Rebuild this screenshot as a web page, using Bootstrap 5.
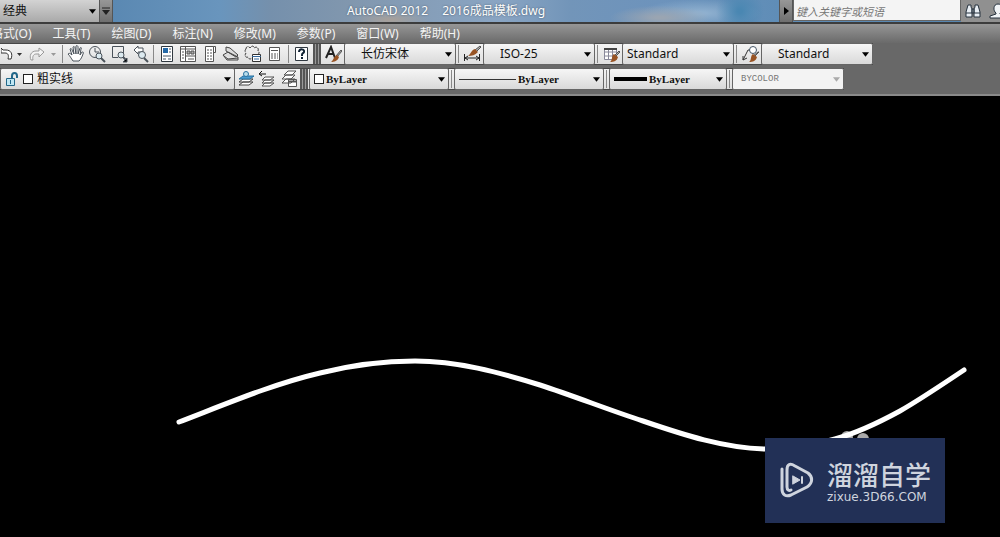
<!DOCTYPE html>
<html lang="zh-CN">
<head>
<meta charset="utf-8">
<meta name="viewport" content="width=device-width, initial-scale=1">
<title>AutoCAD 2012 - 2016成品模板.dwg</title>
<link href="https://cdn.jsdelivr.net/npm/bootstrap@5.3.0/dist/css/bootstrap.min.css" rel="stylesheet">
<style>
  body { font-family: "Noto Sans", "Noto Sans CJK SC", sans-serif; font-size: 12px; line-height: 16px; background: #000; color: #111; }
  .title-bar { height: 24px; border-bottom: 2px solid #3c3c3c;
    background:
      radial-gradient(ellipse 50px 12px at 66% 80%, #9aa5b2 10%, transparent),
      radial-gradient(ellipse 40px 10px at 39% 90%, #a5a09c 10%, transparent),
      radial-gradient(ellipse 24px 24px at 74% 50%, #4a87b2 10%, transparent),
      radial-gradient(ellipse 60px 14px at 70% 60%, #8fb0cf 10%, transparent),
      linear-gradient(90deg, #5a88b2 11%, #6995bd 22%, #7590ac 27%, #8197ae 35%, #8aa5c3 50%, #7295b9 57%, #6d93bc 66%, #5f8db7 78%, #5584ae); }
  .tool-button { height: 20px; width: 21px; border: 0; padding: 0; background: transparent; display: flex; align-items: center; justify-content: center; }
  .title-bar .edge-button { width: 14px; height: 22px; background: linear-gradient(#979797, #6f6f6f); border: 1px solid #555; border-width: 0 1px; }
  .bar-select, .bar-search { background-color: transparent; border: 0; border-radius: 0; font-size: 12px; line-height: 16px; }
  .workspace-box { width: 99px; background: linear-gradient(#d3d3d3, #a9a9a9); }
  .bar-search { width: 168px; height: 21px; background: #f4f4f4; border: 1px solid #666; font-size: 11px; padding: 4px 2px 2px; border-top: 0; }
  .bar-search::placeholder { color: #777; font-style: italic; }
  .tail-icons { width: 39px; background: #909090; }
  .doc-title { color: #fff; text-shadow: 0 0 2px #456; gap: 14px; }
  .menu-strip { height: 19px; margin-left: -9px; gap: 21px; }
  .menu-back { background: linear-gradient(#969696, #6a6a6a); }
  .menu-strip a { color: #f4f4f4; }
  .tool-area { background: #686868; border-bottom: 2px solid #8a8a8a; padding-bottom: 4px; }
  .tool-row { height: 22px; margin-bottom: 3px; border: 1px solid #484848; border-width: 1px 0; background: linear-gradient(#f3f3f3, #dfdfdf); width: max-content; }
  .tool-row svg, .tail-icons svg, .title-bar svg { display: block; flex: none; }
  .tool-button.undo, .tool-button.drop { width: 13px; }
  .tool-button.wide { width: 22px; }
  .divider { width: 1px; height: 18px; margin: 0 2px; background: #888; }
  .handle { width: 8px; height: 20px; margin: 0 1px; background: repeating-linear-gradient(90deg, #555 0 2px, #999 2px 3px); }
  .combo { height: 22px; display: flex; align-items: center; border: 1px solid #666; border-radius: 2px; background: linear-gradient(#f6f6f6, #d9d9d9); }
  .bar-select { --bs-form-select-bg-img: url("data:image/svg+xml,%3Csvg xmlns='http://www.w3.org/2000/svg' viewBox='0 0 8 5'%3E%3Cpath d='M0 0h8L4 5z'/%3E%3C/svg%3E");
    background-image: var(--bs-form-select-bg-img); background-size: 7px 5px; background-position: right 3px center; color: #111; padding: 0 14px 0 4px; height: 20px; }
  .workspace-box .bar-select { padding-left: 3px; height: 22px; }
  .inset { padding-left: 16px; }
  .by-layer { font: bold 11px/16px "Liberation Serif", serif; padding-left: 2px; }
  .by-color { font: 9px/16px "Liberation Mono", monospace; opacity: 1; }
  .combo.dimmed { background: #f3f3f3; }
  .combo.dimmed .bar-select { background-color: transparent; color: #777; --bs-form-select-bg-img: url("data:image/svg+xml,%3Csvg xmlns='http://www.w3.org/2000/svg' viewBox='0 0 8 5'%3E%3Cpath fill='%23aaa' d='M0 0h8L4 5z'/%3E%3C/svg%3E"); }
  .swatch { width: 10px; height: 10px; border: 1px solid #222; background: #fff; flex: none; }
  .thin-line { width: 57px; height: 1px; background: #333; flex: none; }
  .thick-line { width: 33px; height: 4px; background: #000; flex: none; }
  .w-style { width: 112px; }
  .w-layers { width: 235px; }
  .w-color { width: 140px; }
  .w-line { width: 150px; }
  .w-weight { width: 118px; }
  .watermark { right: 55px; bottom: 14px; width: 180px; height: 85px; background: #223056; color: #cfd4de; gap: 13px; padding-left: 14px; }
  .mark-name { font: 500 26px/32px "Noto Sans CJK SC", sans-serif; }
  .mark-site { font: 12px/14px "DejaVu Sans", sans-serif; }
</style>
</head>
<body class="d-flex flex-column min-vh-100 overflow-hidden">
<header>
  <div class="title-bar d-flex">
    <div class="workspace-box"><select class="form-select bar-select" aria-label="工作空间"><option>经典</option></select></div>
    <button class="edge-button tool-button" aria-label="更多"><svg width="8" height="8"><path d="M0 1h8" stroke="#222"/><path d="M0 3h8L4 8z" fill="#222"/></svg></button>
    <div class="doc-title flex-grow-1 d-flex justify-content-center align-items-center"><span>AutoCAD 2012</span><span>2016成品模板.dwg</span></div>
    <button class="edge-button tool-button" aria-label="展开"><svg width="5" height="8"><path d="M0 0l5 4-5 4z"/></svg></button>
    <input class="bar-search" type="search" placeholder="键入关键字或短语" aria-label="搜索">
    <div class="tail-icons d-flex align-items-center gap-2 overflow-hidden ps-1">
      <svg width="16" height="17" viewBox="0 0 16 17" fill="#e8eef4" stroke="#26323e"><path d="M3 2h3v2l1 2v8H1V9zM10 2h3l2 7v5H9V6l1-2zM7 6h2v4H7zM1 10h6M9 10h6"/></svg>
      <svg width="18" height="17" viewBox="0 0 18 17" fill="#f1f4f7" stroke="#26323e"><path d="M9 1c5 0 5 7 2 9v1l6 2v2H1v-2l6-2v-1C4 8 4 1 9 1z"/></svg>
    </div>
  </div>
  <div class="menu-back overflow-hidden">
    <nav class="menu-strip d-flex align-items-center text-nowrap">
      <a class="text-decoration-none" href="#">格式(O)</a>
      <a class="text-decoration-none" href="#">工具(T)</a>
      <a class="text-decoration-none" href="#">绘图(D)</a>
      <a class="text-decoration-none" href="#">标注(N)</a>
      <a class="text-decoration-none" href="#">修改(M)</a>
      <a class="text-decoration-none" href="#">参数(P)</a>
      <a class="text-decoration-none" href="#">窗口(W)</a>
      <a class="text-decoration-none" href="#">帮助(H)</a>
    </nav>
  </div>
  <div class="tool-area overflow-hidden">
    <div class="tool-row d-flex align-items-center">
      <button class="tool-button undo" aria-label="放弃"><svg width="12" height="16" viewBox="0 0 12 16" fill="#fff" stroke="#333"><path d="M0 2v5h4c3 0 4 2 3 6h3c2-5 0-9-5-9H2L0 2"/></svg></button>
      <button class="tool-button drop" aria-label="放弃列表"><svg width="5" height="3"><path d="M0 0h5L2.500 3z" fill="#333"/></svg></button>
      <button class="tool-button" aria-label="重做"><svg width="16" height="16" viewBox="0 0 16 16" fill="#f4f4f4" stroke="#999"><path d="M15 6l-5-4v3H7c-5 0-7 5-5 9h2c-1-4 1-6 3-6h3v3z"/></svg></button>
      <button class="tool-button drop" aria-label="重做列表"><svg width="5" height="3"><path d="M0 0h5L2.500 3z" fill="#999"/></svg></button>
      <span class="divider"></span>
      <button class="tool-button" aria-label="平移"><svg width="18" height="18" viewBox="0 0 18 18" fill="#fff" stroke="#4a525a" stroke-linejoin="round"><path d="M6 16C4 13 3 11 1 9c1-1 2-1 4 1L3 4c1-1 2 0 2 1l2 4-1-7c1-1 2 0 2 1l1 6V1c1-1 2 0 2 1v7l2-6c1-1 2 0 1 1l-1 6 2-3c1 0 2 0 1 2-1 3-2 5-4 7z"/></svg></button>
      <button class="tool-button wide" aria-label="实时缩放"><svg width="18" height="18" viewBox="0 0 18 18" fill="none" stroke="#4a525a"><circle cx="7" cy="7" r="5.500"/><path d="M7 3v4h4"/><circle cx="11" cy="11" r="3" fill="#dceaf0"/><path d="M13 13l4 4" stroke-width="2"/></svg></button>
      <button class="tool-button wide" aria-label="窗口缩放"><svg width="18" height="18" viewBox="0 0 18 18" fill="none" stroke="#4a525a"><path d="M8 12.500H2.500v-11h11V8"/><circle cx="11" cy="10" r="3" fill="#dceaf0"/><path d="M13 12l3 3" stroke-width="2"/><path d="M17 13v4h-4z" fill="#000"/></svg></button>
      <button class="tool-button" aria-label="缩放上一个"><svg width="18" height="18" viewBox="0 0 18 18" fill="#fff" stroke="#4a525a"><path d="M2 5l4-4v2h5v4H6v2z"/><circle cx="10" cy="10" r="3.500" fill="#dceaf0"/><path d="M12 13l4 4" stroke-width="2"/></svg></button>
      <span class="divider"></span>
      <button class="tool-button" aria-label="特性"><svg width="16" height="18" viewBox="0 0 16 18" fill="#fff" stroke="#303840"><path d="M2.500 1.500h11v15h-11z"/><path d="M4 3h5v5H4z" fill="#2469a8" stroke="none"/><path d="M10 4h2M10 7h2M4 11h8M4 14h3M9 14h3" stroke="#456"/></svg></button>
      <button class="tool-button wide" aria-label="设计中心"><svg width="18" height="18" viewBox="0 0 18 18" fill="#fff" stroke="#555"><path d="M1.500 1.500h15v15h-15zM6.500 2v14M1 4h16M3 7h2M3 10h2M3 13h2M6 11h11"/><path d="M8 6h3v3H8zM12 6h3v3h-3z" fill="#aaa"/><path d="M9 14h6"/></svg></button>
      <button class="tool-button" aria-label="工具选项板"><svg width="16" height="18" viewBox="0 0 16 18" fill="#fff" stroke="#555"><path d="M3.500 1.500h8v15h-8zM11.500 1.500h2v6h-2"/><path d="M5 5h5M5 8h5M5 11h5M5 14h5" stroke-dasharray="2 1"/></svg></button>
      <button class="tool-button wide" aria-label="图纸集"><svg width="18" height="18" viewBox="0 0 18 18" fill="#ddd" stroke="#444" stroke-linejoin="round"><path d="M4 2l4 1 8 7-2 2L4 6zM1 10l5-3 10 5v3H5zM2 11l4 3 10-1"/></svg></button>
      <button class="tool-button" aria-label="标记集"><svg width="18" height="18" viewBox="0 0 18 18" fill="none" stroke="#333"><path d="M2 4c0-3 3-3 4-1 2-3 4-2 4 0 3-2 5 0 4 3 2 2 1 3 0 3M2 4c-2 2 0 4 0 4-2 3 0 5 2 4 1 3 3 2 4 1" stroke-dasharray="3 1"/><path d="M8.500 9.500h8v7h-8z" fill="#fff"/><path d="M8 11.500h9M10 14h5" stroke="#369"/></svg></button>
      <button class="tool-button" aria-label="快速计算器"><svg width="16" height="18" viewBox="0 0 16 18" fill="#fff" stroke="#555"><path d="M3.500 2.500h10v13h-10zM5 5.500h7"/><path d="M5 9h7M5 11h7M5 13h7" stroke-dasharray="2 1"/></svg></button>
      <span class="divider ms-1"></span>
      <button class="tool-button" aria-label="帮助"><svg width="16" height="18" viewBox="0 0 16 18"><path d="M1.500 2.500h12v13h-12z" fill="#fff" stroke="#303840"/><path d="M5 7c0-4 6-3 5 0 0 1-2 1-2 3v1M8 12v2" fill="none" stroke="#123" stroke-width="2"/></svg></button>
      <span class="handle"></span>
      <button class="tool-button wide" aria-label="文字样式"><svg width="18" height="18" viewBox="0 0 18 18"><path d="M2 13L7 2l4 11M4 9h6" fill="none" stroke="#222" stroke-width="2"/><path d="M17 5l-5 6 1 1 5-6z" fill="#aaa" stroke="#555"/><path d="M13 10l2 2c-1 4-5 5-8 5 3-2 2-5 6-7z" fill="#985323"/></svg></button>
      <div class="combo w-style"><select class="form-select bar-select inset" aria-label="文字样式列表"><option>长仿宋体</option></select></div>
      <span class="divider"></span>
      <button class="tool-button wide" aria-label="标注样式"><svg width="18" height="18" viewBox="0 0 18 18"><path d="M1.500 9v7M16.500 9v7M2 13h14M5 11l-3 2 3 2M13 11l3 2-3 2" fill="none" stroke="#222"/><path d="M17 1l-5 4 1 2 5-5z" fill="#aaa" stroke="#555"/><path d="M12 4l3 3c-3 3-6 4-10 4 3-2 3-6 7-7z" fill="#985323"/></svg></button>
      <div class="combo w-style"><select class="form-select bar-select inset" aria-label="标注样式列表"><option>ISO-25</option></select></div>
      <span class="divider"></span>
      <button class="tool-button wide" aria-label="表格样式"><svg width="18" height="18" viewBox="0 0 18 18"><path d="M2.500 3.500h12v11h-12zM2 7h12M2 11h12M6.500 4v10M10.500 4v10" fill="#fff" stroke="#889"/><path d="M2 3h13v2H2z" fill="#444"/><path d="M17 6l-5 5 1 1 5-5z" fill="#aaa" stroke="#555"/><path d="M12 9l4 3c-1 4-4 5-8 5 3-2 1-6 4-8z" fill="#985323"/></svg></button>
      <div class="combo w-style"><select class="form-select bar-select" aria-label="表格样式列表"><option>Standard</option></select></div>
      <span class="divider"></span>
      <button class="tool-button wide" aria-label="多重引线样式"><svg width="18" height="18" viewBox="0 0 18 18"><path d="M2 15L7 5h3M2 15v-4M2 15l4-2" fill="none" stroke="#333"/><circle cx="12" cy="5" r="3.500" fill="#fff" stroke="#456"/><path d="M17 7l-5 4 1 1 5-5z" fill="#aaa" stroke="#555"/><path d="M12 9l4 3c-1 4-4 5-8 5 3-2 1-6 4-8z" fill="#985323"/></svg></button>
      <div class="combo w-style"><select class="form-select bar-select inset" aria-label="多重引线样式列表"><option>Standard</option></select></div>
    </div>
    <div class="tool-row d-flex align-items-center mb-0">
      <div class="combo w-layers ps-1">
        <svg width="14" height="15" viewBox="0 0 14 15"><path d="M1.500 6.500h8v7h-8z" fill="#bfe6f3" stroke="#226789"/><path d="M7 6V4c0-4 5-4 5 0v2" fill="none" stroke="#226789" stroke-width="2"/><path d="M5 8h1v4H5z" fill="#226789"/></svg>
        <span class="swatch ms-1"></span>
        <select class="form-select bar-select" aria-label="图层"><option>粗实线</option></select>
      </div>
      <button class="tool-button" aria-label="将对象的图层置为当前"><svg width="18" height="18" viewBox="0 0 18 18" fill="#fff" stroke="#444"><path d="M2 15l4-3h10l-4 3zM2 12l4-3h10l-4 3z"/><path d="M2 9l4-3h11l-4 3z" fill="#4a9bd0" stroke="#27709f"/><circle cx="9" cy="4" r="2.500" fill="#b9ddec" stroke="#27709f"/></svg></button>
      <button class="tool-button wide" aria-label="上一个图层"><svg width="18" height="18" viewBox="0 0 18 18" fill="#fff" stroke="#555"><path d="M4 16l3-3h9l-4 3zM4 13l3-3h9l-4 3zM4 10l3-3h9l-4 3z"/><path d="M8 4H2M4 1L1 4l3 2" fill="none" stroke="#111"/></svg></button>
      <button class="tool-button" aria-label="图层状态管理器"><svg width="18" height="18" viewBox="0 0 18 18" fill="#fff" stroke="#555"><path d="M2 13l4-4h9l-4 4zM2 9l4-4h9l-4 4zM4 5l4-4h8l-4 4zM8.500 9.500h8v7h-8z"/><path d="M8 11.500h9" stroke-width="2"/></svg></button>
      <span class="handle"></span>
      <div class="combo w-color ps-1">
        <span class="swatch"></span>
        <select class="form-select bar-select by-layer" aria-label="颜色"><option>ByLayer</option></select>
      </div>
      <span class="divider"></span>
      <div class="combo w-line ps-1">
        <span class="thin-line"></span>
        <select class="form-select bar-select by-layer" aria-label="线型"><option>ByLayer</option></select>
      </div>
      <span class="divider"></span>
      <div class="combo w-weight ps-1">
        <span class="thick-line"></span>
        <select class="form-select bar-select by-layer" aria-label="线宽"><option>ByLayer</option></select>
      </div>
      <span class="divider"></span>
      <div class="combo w-style dimmed ps-1">
        <select class="form-select bar-select by-color" aria-label="打印样式" disabled><option>BYCOLOR</option></select>
      </div>
    </div>
  </div>
</header>
<main class="flex-grow-1 position-relative">
  <svg class="d-block w-100" viewBox="0 0 1000 441" role="img" aria-label="样条曲线">
    <g fill="#aaa"><circle cx="847" cy="341" r="6"/><circle cx="863" cy="343" r="6"/></g>
    <path d="M179 326C226 308 273 288 320 277C352 269 383 265 415 265C457 265 498 276 540 289C574 300 609 314 643 325C684 339 724 352 765 353C788 354 812 350 835 343C857 337 878 327 900 315C921 303 943 288 964 274" fill="none" stroke="#fff" stroke-width="5" stroke-linecap="round"/>
  </svg>
  <div class="watermark position-absolute d-flex align-items-center">
    <svg width="35" height="37" viewBox="0 0 35 37" fill="none" stroke="#cfd4de" stroke-width="3" stroke-linecap="round" stroke-linejoin="round"><path d="M3 7v20c0 6 4 8 9 6l16-8c6-4 6-10 1-14L16 4C11 1 8 2 8 8v17c0 3 2 4 4 3"/><path d="M14 14l7 4-7 4z" fill="#cfd4de" stroke-width="1"/><path d="M23 15v6" stroke-width="2"/></svg>
    <div>
      <div class="mark-name">溜溜自学</div>
      <div class="mark-site">zixue.3D66.COM</div>
    </div>
  </div>
</main>
<script src="https://cdn.jsdelivr.net/npm/bootstrap@5.3.0/dist/js/bootstrap.bundle.min.js"></script>
</body>
</html>
